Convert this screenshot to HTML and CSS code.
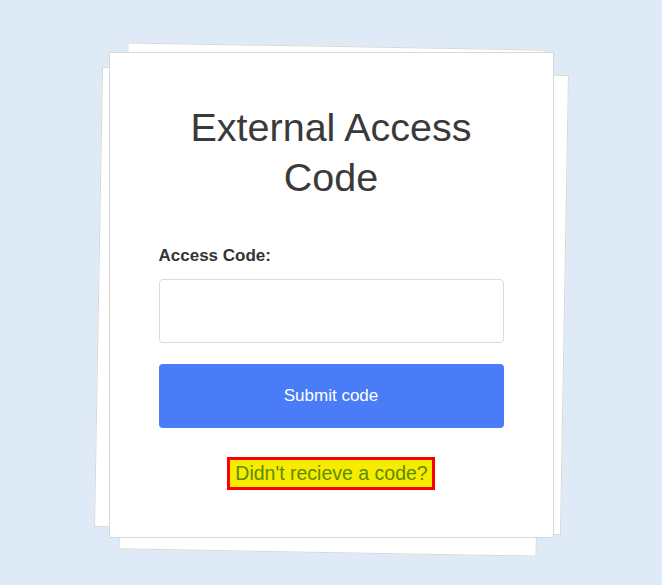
FILE: index.html
```html
<!DOCTYPE html>
<html lang="en">
<head>
  <meta charset="UTF-8" />
  <meta name="viewport" content="width=device-width, initial-scale=1.0">
  <title>External Access Code</title>
  <link rel="stylesheet" href="styles.css">
</head>
<body>
  <div class="card">
    <h1>External Access Code</h1>
    <form class="code-form">
      <label for="access-code">Access Code:</label>
      <input type="text" id="access-code" name="code" />
      <button type="submit">Submit code</button>
    </form>
    <div class="resend">
      <a href="#" class="resend-link">Didn't recieve a code?</a>
    </div>
  </div>
</body>
</html>
```

FILE: styles.css
```css
html, body {
  margin: 0;
  height: 100%;
}

body {
  font-family: 'Liberation Sans', Arial, sans-serif;
  background: #deebf6;
  color: #333;
  padding-top: 52px;
  box-sizing: border-box;
}

.card {
  position: relative;
  width: 445px;
  margin: 0 auto;
  box-sizing: border-box;
  background: #fff;
  border: 1px solid #d8d8d8;
  padding: 49px 49px 47px;
}

/* stacked paper sheets behind the card */
.card::before,
.card::after {
  content: "";
  position: absolute;
  z-index: -1;
  background: #fff;
  border: 1px solid #d8d8d8;
  box-sizing: border-box;
  transform: rotate(1deg);
}

.card::before {
  left: 13px;
  top: -7px;
  width: 418px;
  height: 507px;
}

.card::after {
  left: -12px;
  top: 18px;
  width: 467px;
  height: 460px;
}

h1 {
  margin: 0;
  font-size: 39.5px;
  line-height: 50px;
  font-weight: normal;
  color: #3a3a3a;
  text-align: center;
  padding: 0 20px;
}

.code-form {
  display: flex;
  flex-direction: column;
  margin-top: 44px;
}

.code-form label {
  font-size: 17px;
  line-height: 20px;
  font-weight: bold;
  color: #333;
  margin-bottom: 13px;
}

.code-form input {
  height: 64px;
  box-sizing: border-box;
  border: 1px solid #dcdcdc;
  border-radius: 4px;
  font-size: 17px;
  padding: 0 12px;
  margin: 0;
}

.code-form button {
  height: 64px;
  margin-top: 21px;
  border: none;
  border-radius: 4px;
  background: #4a7cf8;
  color: #fff;
  font-family: inherit;
  font-size: 17px;
  cursor: pointer;
}

.resend {
  text-align: center;
  margin-top: 29px;
}

.resend-link {
  display: inline-block;
  font-size: 19.5px;
  line-height: 23px;
  padding: 2px 4px 2px 5px;
  background: #f7ec00;
  border: 3px solid #f00;
  color: #5d8a00;
  text-decoration: none;
}
```
